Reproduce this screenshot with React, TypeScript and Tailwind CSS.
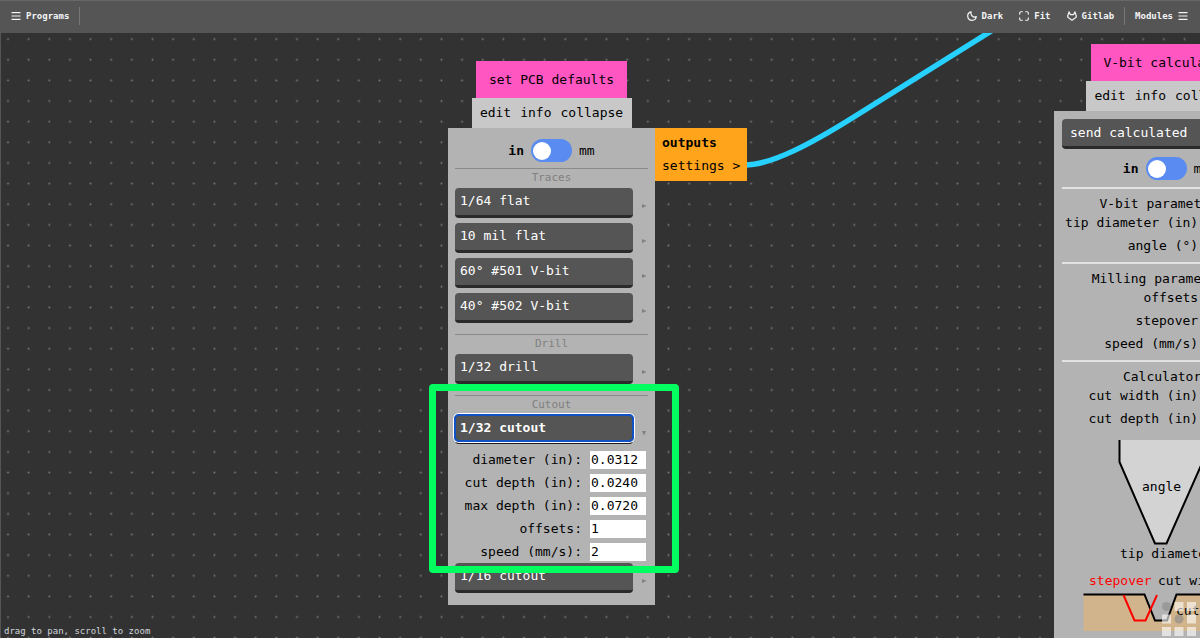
import React, { useState } from "react";

const mono = "font-['DejaVu_Sans_Mono','Liberation_Mono',monospace]";

function MenuIcon() {
  return (
    <svg viewBox="0 0 10 10" className="size-[10px]" fill="none" stroke="currentColor" strokeWidth="1.2" aria-hidden="true">
      <path d="M.5 1.6h9M.5 5h9M.5 8.4h9" />
    </svg>
  );
}

function MoonIcon() {
  return (
    <svg viewBox="0 0 10 10" className="size-[10px]" fill="none" stroke="currentColor" strokeWidth="1.2" strokeLinejoin="round" aria-hidden="true">
      <path d="M4.200 .8A4.300 4.300 0 1 0 9.300 5.500C7.900 6.300 6.200 6 5.200 5C4.200 4 3.700 2.200 4.200 .8Z" />
    </svg>
  );
}

function FitIcon() {
  return (
    <svg viewBox="0 0 10 10" className="size-[10px]" fill="none" stroke="currentColor" strokeWidth="1.1" strokeLinecap="round" aria-hidden="true">
      <path d="M3.300 .7H2A1.300 1.300 0 0 0 .7 2V3.300M6.700 .7H8A1.300 1.300 0 0 1 9.300 2V3.300M9.300 6.700V8A1.300 1.300 0 0 1 8 9.300H6.700M3.300 9.300H2A1.300 1.300 0 0 1 .7 8V6.700" />
    </svg>
  );
}

function GitlabIcon() {
  return (
    <svg viewBox="0 0 10 10" className="size-[10px]" fill="none" stroke="currentColor" strokeWidth="1.2" strokeLinejoin="round" aria-hidden="true">
      <path d="M2 .9 .7 5Q.500 5.900 1.200 6.500L5 9.200 8.800 6.500Q9.500 5.900 9.300 5L8 .9 6.500 3.700H3.500Z" />
    </svg>
  );
}

function BarButton({ children }: { children: React.ReactNode }) {
  return <button className="flex items-center gap-[5px] leading-4">{children}</button>;
}

function TopBar() {
  return (
    <header className="relative z-20 flex h-[33px] items-center justify-between bg-[#555] pr-3 pb-px pl-[11px] text-[9px] font-bold text-gray-100 inset-shadow-[0_1px_0_#666]">
      <div className="flex items-center gap-[10px]">
        <BarButton><MenuIcon />Programs</BarButton>
        <span className="h-[18px] w-px bg-[#777]" />
      </div>
      <div className="flex items-center gap-4">
        <BarButton><MoonIcon />Dark</BarButton>
        <BarButton><FitIcon />Fit</BarButton>
        <div className="flex items-center gap-[10px]">
          <BarButton><GitlabIcon />Gitlab</BarButton>
          <span className="h-[18px] w-px bg-[#777]" />
          <BarButton>Modules<MenuIcon /></BarButton>
        </div>
      </div>
    </header>
  );
}

function CanvasBackground() {
  return (
    <svg className="absolute inset-0 size-full" aria-hidden="true">
      <defs>
        <pattern id="dots" width="20.64" height="20.64" patternUnits="userSpaceOnUse" x="-2.3" y="-4.2">
          <circle cx="10.32" cy="10.32" r="0.95" fill="#7a7a7a" />
        </pattern>
      </defs>
      <rect width="100%" height="100%" fill="url(#dots)" />
      <path d="M745 132C772 132 813 109.500 853 84.500L1000 -7.500" fill="none" stroke="#26d0ff" strokeWidth="5.500" />
    </svg>
  );
}

function UnitSwitch() {
  const [mm, setMm] = useState(false);
  return (
    <label className="flex h-[23px] items-center justify-center gap-[7px]">
      <span className={mm ? "" : "font-bold"}>in</span>
      <span className="relative flex h-[23px] w-[41px] items-center rounded-full bg-[#598bf0] px-[2px]">
        <input
          type="checkbox"
          role="switch"
          aria-label="Use millimetres"
          checked={mm}
          onChange={(e) => setMm(e.target.checked)}
          className="peer absolute inset-0 m-0 cursor-pointer appearance-none"
        />
        <span className="pointer-events-none size-[18px] rounded-full bg-white peer-checked:ml-auto" />
      </span>
      <span className={mm ? "font-bold" : ""}>mm</span>
    </label>
  );
}

function NodeHead({ title }: { title: string }) {
  return (
    <>
      <h2 className="flex h-[37px] w-[151px] items-center justify-center bg-[#ff56c1]">{title}</h2>
      <div className="flex h-[30px] w-[160px] items-center justify-center gap-[9px] bg-[#c8c8c8]">
        <button>edit</button>
        <button>info</button>
        <button>collapse</button>
      </div>
    </>
  );
}

const toolFace = "flex h-[30px] items-center rounded-[4px] border-b-[3px] border-[#2a2a2a] bg-[#555] text-white";

function ToolRow({ name }: { name: string }) {
  return (
    <div className="flex items-center justify-between pr-px">
      <button className={`${toolFace} w-[178px] px-[5px] pb-px`}>{name}</button>
      <svg viewBox="0 0 6 6" className="mt-[6px] size-[6px]" aria-hidden="true">
        <path d="M1 1 5.500 3 1 5Z" fill="#808080" />
      </svg>
    </div>
  );
}

function Section({ title, children }: { title: string; children: React.ReactNode }) {
  return (
    <section className="border-t border-[#8a8a8a]">
      <h3 className="h-[19px] text-center text-[11px] leading-[18px] text-[#808080]">{title}</h3>
      <div className="flex flex-col gap-[5px]">{children}</div>
    </section>
  );
}

function Field({ label, value }: { label: string; value: string }) {
  return (
    <label className="flex h-[23px] items-center justify-end gap-2">
      {label}
      <input defaultValue={value} className="h-[18px] w-[56px] bg-white px-px outline-none" />
    </label>
  );
}

function PcbNode() {
  return (
    <article className="absolute top-[28px] left-[448px] flex w-[207px] flex-col items-center">
      <NodeHead title="set PCB defaults" />
      <div className="relative w-full bg-[#b3b3b3] pt-[11px] pr-[7px] pb-3 pl-[7px]">
        <UnitSwitch />
        <div className="mt-[6px] flex flex-col gap-[11px]">
          <Section title="Traces">
            <ToolRow name="1/64 flat" />
            <ToolRow name="10 mil flat" />
            <ToolRow name="60° #501 V-bit" />
            <ToolRow name="40° #502 V-bit" />
          </Section>
          <Section title="Drill">
            <ToolRow name="1/32 drill" />
          </Section>
          <Section title="Cutout">
            <div>
              <div className="flex items-center justify-between pr-px">
                <button aria-expanded="true" className="w-[178px] rounded-[4px] border-b-[3px] border-[#1c1c1c]">
                  <span className="flex h-[26px] items-center rounded-[4px] bg-[#555] px-[5px] font-bold text-white ring-1 ring-white outline-2 -outline-offset-1 outline-[#1251c4] ring-offset-1 ring-offset-[#1251c4]">
                    1/32 cutout
                  </span>
                </button>
                <svg viewBox="0 0 6 6" className="mt-[6px] size-[6px]" aria-hidden="true">
                  <path d="M1 1H5L3 5.500Z" fill="#808080" />
                </svg>
              </div>
              <div className="mt-1 pr-[2px]">
                <Field label="diameter (in):" value="0.0312" />
                <Field label="cut depth (in):" value="0.0240" />
                <Field label="max depth (in):" value="0.0720" />
                <Field label="offsets:" value="1" />
                <Field label="speed (mm/s):" value="2" />
              </div>
              <ToolRow name="1/16 cutout" />
            </div>
          </Section>
        </div>
        <div className="absolute top-0 left-full flex h-[53px] w-[92px] flex-col justify-center bg-[#ffa41b] px-[7px] pb-px leading-[23px]">
          <b>outputs</b>
          <button className="text-left whitespace-nowrap">settings &gt;</button>
        </div>
      </div>
    </article>
  );
}

function ParamGroup({ title, fields }: { title: string; fields: [string, string][] }) {
  return (
    <section className="mb-[5px] border-t-2 border-[#e2e2e2] pt-[7px]">
      <h3 className="text-center leading-[15px]">{title}</h3>
      {fields.map(([label, value]) => (
        <Field key={label} label={label} value={value} />
      ))}
    </section>
  );
}

function CutterDiagram() {
  return (
    <svg viewBox="0 0 208 208" className="block h-[208px] w-[208px] text-[13px]" fill="none" strokeWidth="2">
      <path d="M57.500 10V32L93 113.500H104.500L140.500 32V10" fill="#d3d3d3" stroke="#000" />
      <path d="M21.500 165H82.500L93 190.500H105L114.500 165H187V201H21.500Z" fill="#d2b48c" />
      <path d="M21.500 164.500H82.500L93 190.500H105L114.500 164.500H187" stroke="#000" />
      <path d="M61.500 165 72.500 190.500H83.500L95 165" stroke="#f00" />
      <g fill="#000">
        <text x="80" y="61">angle</text>
        <text x="58" y="128">tip diameter</text>
        <text x="27" y="155" fill="#f00">stepover</text>
        <text x="96" y="155">cut width</text>
        <text x="114" y="185">cut depth</text>
      </g>
    </svg>
  );
}

function VbitNode() {
  return (
    <article className="absolute top-[11px] left-[1054px] flex w-[224px] flex-col items-center">
      <NodeHead title="V-bit calculator" />
      <div className="w-full bg-[#b3b3b3] px-2 pt-2">
        <button className={`${toolFace} w-full px-2`}>send calculated</button>
        <div className="mt-2 mb-[7px]">
          <UnitSwitch />
        </div>
        <ParamGroup title="V-bit parameters:" fields={[["tip diameter (in):", "0.0050"], ["angle (°):", "60"]]} />
        <ParamGroup title="Milling parameters:" fields={[["offsets:", "4"], ["stepover:", "0.5"], ["speed (mm/s):", "4"]]} />
        <div className="-mb-[5px]">
          <ParamGroup title="Calculator:" fields={[["cut width (in):", "0.0100"], ["cut depth (in):", "0.0040"]]} />
        </div>
        <CutterDiagram />
      </div>
    </article>
  );
}

function LabLogo() {
  return (
    <svg viewBox="0 0 34 34" className="absolute right-1 bottom-[2px] size-[34px]" fill="#fff" fillOpacity="0.6" aria-hidden="true">
      <path d="M12.500 0h9v9h-9zM25 0h9v9h-9zM0 12.500h9v9H0zM25 12.500h9v9h-9zM0 25h9v9H0zM12.500 25h9v9h-9zM25 25h9v9h-9z" />
      <circle cx="4.500" cy="4.500" r="4.500" fill="#888" />
      <circle cx="17" cy="17" r="4.500" fill="#888" />
    </svg>
  );
}

export default function App() {
  return (
    <div className={`${mono} flex h-screen flex-col overflow-hidden bg-[#323232] text-[13px] text-black`}>
      <TopBar />
      <main className="relative min-h-0 flex-1 overflow-hidden border-l border-[#555]">
        <div className="absolute inset-y-0 right-0 -left-px">
          <CanvasBackground />
          <PcbNode />
          <VbitNode />
          <div className="pointer-events-none absolute top-[351px] left-[429px] h-[189px] w-[250px] rounded-[4px] border-[7px] border-[#00ff5f]" />
        </div>
        <p className="absolute bottom-0 left-[3px] text-[9px] leading-[14px] text-gray-300">drag to pan, scroll to zoom</p>
        <LabLogo />
      </main>
    </div>
  );
}
